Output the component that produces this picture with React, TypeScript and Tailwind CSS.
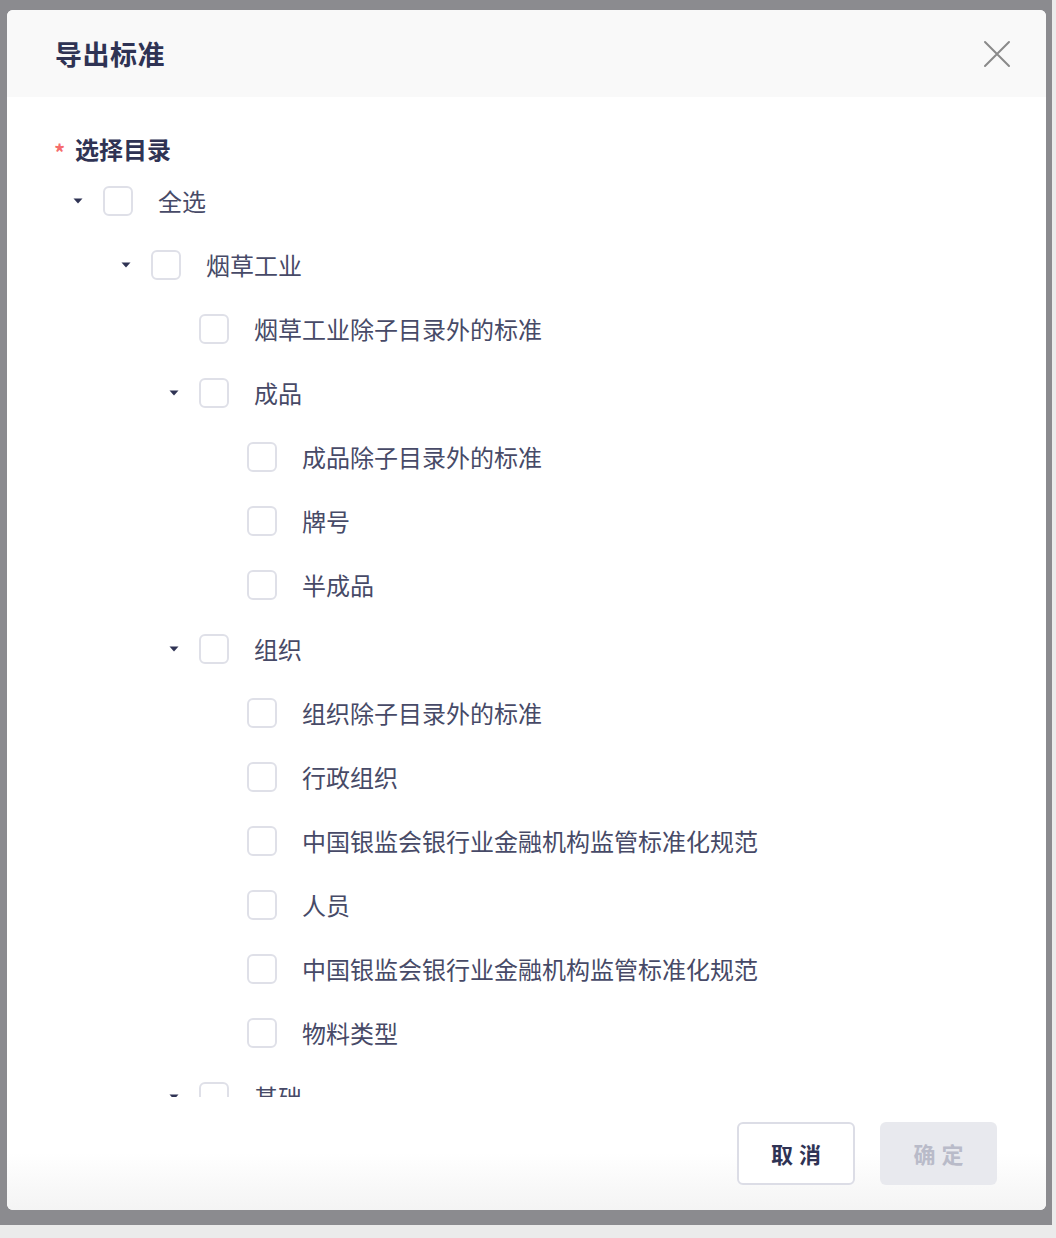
import React from "react";

type Row = { label: string; level: number; expandable: boolean };

const rows: Row[] = [
  { label: "全选", level: 0, expandable: true },
  { label: "烟草工业", level: 1, expandable: true },
  { label: "烟草工业除子目录外的标准", level: 2, expandable: false },
  { label: "成品", level: 2, expandable: true },
  { label: "成品除子目录外的标准", level: 3, expandable: false },
  { label: "牌号", level: 3, expandable: false },
  { label: "半成品", level: 3, expandable: false },
  { label: "组织", level: 2, expandable: true },
  { label: "组织除子目录外的标准", level: 3, expandable: false },
  { label: "行政组织", level: 3, expandable: false },
  { label: "中国银监会银行业金融机构监管标准化规范", level: 3, expandable: false },
  { label: "人员", level: 3, expandable: false },
  { label: "中国银监会银行业金融机构监管标准化规范", level: 3, expandable: false },
  { label: "物料类型", level: 3, expandable: false },
  { label: "基础", level: 2, expandable: true },
];

const indent = ["pl-[59px]", "pl-[107px]", "pl-[155px]", "pl-[203px]"];

function Caret() {
  return (
    <svg width="10" height="6" viewBox="0 0 10 6">
      <path d="M0.5 0.5 L9.5 0.5 L5 5.5 Z" fill="#2f3354" />
    </svg>
  );
}

export default function App() {
  const font = { fontFamily: '"Noto Sans CJK SC", "Noto Sans", sans-serif' };
  return (
    <div className="w-[1056px] h-[1238px] bg-[#ebebeb] overflow-hidden" style={font}>
      <div className="w-[1052px] h-[1225px] bg-[#8b8b8f] pt-[10px] pl-[7px]">
        <div className="w-[1039px] h-[1200px] bg-white rounded-[6px] overflow-hidden flex flex-col">
          {/* header */}
          <div className="h-[87px] shrink-0 bg-[#f9f9f9] flex items-center justify-between pl-[48px] pr-[35px]">
            <div className="text-[27px] font-bold text-[#2f3354] leading-none tracking-[0.5px]">导出标准</div>
            <svg width="28" height="28" viewBox="0 0 28 28">
              <path d="M2 2 L26 26 M26 2 L2 26" stroke="#8a8a8a" strokeWidth="2" strokeLinecap="round" />
            </svg>
          </div>
          {/* body */}
          <div className="h-[1000px] shrink-0 overflow-hidden pt-[32px]">
            <div className="h-[40px] flex items-center pl-[47px]">
              <span className="text-[#f56c6c] text-[22px] font-bold leading-none w-[21px] mt-[4px]">*</span>
              <span className="text-[24px] font-semibold text-[#2f3354] leading-none">选择目录</span>
            </div>
            {rows.map((r, i) => (
              <div key={i} className={`h-[64px] flex items-center ${indent[r.level]}`}>
                <div className="w-[24px] h-[30px] flex items-center justify-center">
                  {r.expandable ? <Caret /> : null}
                </div>
                <div className="ml-[13px] w-[30px] h-[30px] rounded-[6px] border-2 border-[#dfe0e8] bg-white shrink-0" />
                <div className="ml-[25px] text-[24px] text-[#474a67] leading-none whitespace-nowrap">{r.label}</div>
              </div>
            ))}
          </div>
          {/* footer */}
          <div className="flex-1 bg-gradient-to-b from-white via-white to-[#f4f4f4] flex justify-end items-start pt-[25px] pr-[49px] gap-[25px]">
            <button className="w-[118px] h-[63px] rounded-[6px] border-2 border-[#dcdde6] bg-white text-[22px] font-semibold text-[#2f3354] tracking-[6px] pl-[6px]">
              取消
            </button>
            <button className="w-[117px] h-[63px] rounded-[6px] bg-[#e8e9ee] text-[22px] font-semibold text-[#b9bbc9] tracking-[6px] pl-[6px]">
              确定
            </button>
          </div>
        </div>
      </div>
    </div>
  );
}
